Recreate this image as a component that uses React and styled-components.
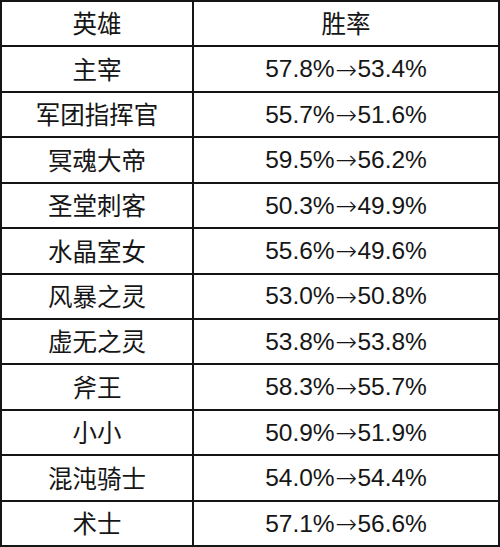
import React from 'react'
import styled, { createGlobalStyle } from 'styled-components';

const rows = [
    ['主宰', '57.8%', '53.4%'],
    ['军团指挥官', '55.7%', '51.6%'],
    ['冥魂大帝', '59.5%', '56.2%'],
    ['圣堂刺客', '50.3%', '49.9%'],
    ['水晶室女', '55.6%', '49.6%'],
    ['风暴之灵', '53.0%', '50.8%'],
    ['虚无之灵', '53.8%', '53.8%'],
    ['斧王', '58.3%', '55.7%'],
    ['小小', '50.9%', '51.9%'],
    ['混沌骑士', '54.0%', '54.4%'],
    ['术士', '57.1%', '56.6%'],
];

const Global = createGlobalStyle`
    body {
        margin: 0;
        background: #fff;
    }
`;

const Table = styled.div`
    width: 500px;
    height: 547px;
    box-sizing: border-box;
    display: grid;
    grid-template-columns: 190px 1fr;
    grid-template-rows: repeat(12, 1fr);
    gap: 2px;
    padding: 2px;
    background: #151515;
`;

const Cell = styled.div`
    background: #fff;
    display: flex;
    align-items: center;
    justify-content: center;
    color: #161616;
    font-size: 24.5px;
    font-family: ${props => props.num
        ? '"Liberation Sans", Arial, sans-serif'
        : '"Noto Sans CJK SC", "Microsoft YaHei", sans-serif'};
    line-height: 1;
    padding-top: ${props => props.num ? '1px' : '0'};
`;

const Arrow = styled.span`
    font-family: "DejaVu Sans", sans-serif;
    font-weight: 200;
    font-size: 26px;
    margin: 0 0 0 1px;
`;

function App() {
    return (
        <>
            <Global />
            <Table>
                <Cell>英雄</Cell>
                <Cell>胜率</Cell>
                {rows.map(([name, from, to]) => (
                    <React.Fragment key={name}>
                        <Cell>{name}</Cell>
                        <Cell num>{from}<Arrow>→</Arrow>{to}</Cell>
                    </React.Fragment>
                ))}
            </Table>
        </>
    )
}

export default App;
